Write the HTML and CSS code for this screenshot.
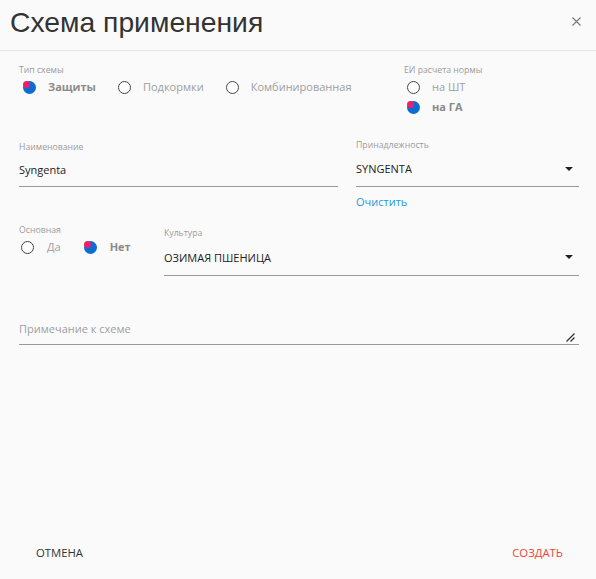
FILE: index.html
```html
<!DOCTYPE html>
<html lang="ru">
<head>
<meta charset="utf-8">
<link rel="stylesheet" href="styles.css">
</head>
<body>
<div class="dialog">
  <header class="head">
    <h1 class="title">Схема применения</h1>
    <button class="close" aria-label="close">
      <svg width="9" height="9" viewBox="0 0 9 9"><path d="M0.5 0.5L8.5 8.5M8.5 0.5L0.5 8.5" stroke="#777" stroke-width="1.1" fill="none"/></svg>
    </button>
  </header>
  <main class="content">
    <div class="row row-type">
      <div class="group">
        <div class="label">Тип схемы</div>
        <div class="radios">
          <span class="radio checked"><i class="dot"></i><span>Защиты</span></span>
          <span class="radio"><i class="dot"></i><span>Подкормки</span></span>
          <span class="radio"><i class="dot"></i><span>Комбинированная</span></span>
        </div>
      </div>
      <div class="group units">
        <div class="label">ЕИ расчета нормы</div>
        <div class="radios vertical">
          <span class="radio"><i class="dot"></i><span>на ШТ</span></span>
          <span class="radio checked"><i class="dot"></i><span>на ГА</span></span>
        </div>
      </div>
    </div>

    <div class="row row-name">
      <div class="field name">
        <div class="label">Наименование</div>
        <div class="input"><span class="value">Syngenta</span></div>
      </div>
      <div class="field owner">
        <div class="label">Принадлежность</div>
        <div class="input"><span class="value">SYNGENTA</span><i class="caret"></i></div>
        <a class="clear">Очистить</a>
      </div>
    </div>

    <div class="row row-main">
      <div class="group basic">
        <div class="label">Основная</div>
        <div class="radios">
          <span class="radio"><i class="dot"></i><span>Да</span></span>
          <span class="radio checked"><i class="dot"></i><span>Нет</span></span>
        </div>
      </div>
      <div class="field culture">
        <div class="label">Культура</div>
        <div class="input"><span class="value">ОЗИМАЯ ПШЕНИЦА</span><i class="caret"></i></div>
      </div>
    </div>

    <div class="row row-note">
      <div class="input note">
        <span class="placeholder">Примечание к схеме</span>
        <svg class="resize" width="9" height="9" viewBox="0 0 9 9"><path d="M8.5 0.5L0.5 8.5M8.5 4.5L4.5 8.5" stroke="#333" stroke-width="1.3" fill="none"/></svg>
      </div>
    </div>
  </main>
  <footer class="foot">
    <button class="btn cancel">ОТМЕНА</button>
    <button class="btn create">СОЗДАТЬ</button>
  </footer>
</div>
</body>
</html>
```
FILE: styles.css
```css
* { box-sizing: border-box; }
html, body { margin: 0; padding: 0; }
body {
  background: #fafafa;
  font-family: "Open Sans", "Noto Sans", sans-serif;
  color: #222;
  width: 596px;
  height: 579px;
  overflow: hidden;
}
.dialog {
  display: flex;
  flex-direction: column;
  height: 579px;
}
.head {
  height: 51px;
  border-bottom: 1px solid #e6e6e6;
  display: flex;
  align-items: flex-start;
  justify-content: space-between;
  padding: 0 15px 0 10px;
}
.title {
  margin: 6px 0 0;
  font-family: "Liberation Sans", Arial, sans-serif;
  font-weight: normal;
  font-size: 28.3px;
  line-height: 32px;
  color: #333;
}
.close {
  margin-top: 17px;
  border: 0;
  background: none;
  padding: 0;
  width: 9px;
  height: 9px;
  display: flex;
}
.content {
  flex: 1;
  padding: 0 17px 0 19px;
  display: flex;
  flex-direction: column;
}
.label {
  font-size: 8.7px;
  line-height: 12px;
  color: #9a9a9a;
}
.row { display: flex; }
.row-type { margin-top: 13px; height: 64px; }
.row-type .group:first-child { width: 385px; }
.radios { display: flex; align-items: center; margin-top: 3px; }
.radios.vertical { flex-direction: column; align-items: flex-start; gap: 4px; }
.radio {
  display: inline-flex;
  align-items: center;
  font-size: 11px;
  line-height: 16px;
  color: #9e9e9e;
  margin-right: 18px;
}
.radio .dot {
  width: 13px;
  height: 13px;
  border-radius: 50%;
  border: 1.5px solid #444;
  margin: 0 12px 0 4px;
  position: relative;
  background: #fff;
}
.radio.checked .dot {
  border: 0;
  background: #0d6cd4;
}
.radio.checked .dot::after {
  content: "";
  position: absolute;
  left: 0;
  top: 0;
  width: 7px;
  height: 7px;
  border-radius: 50%;
  background: #e8226a;
}
.radio.checked span { font-weight: bold; color: #8a8a8a; }
.units .radio .dot { margin-left: 3px; }

.row-name { gap: 18px; height: 96px; }
.name { width: 319px; padding-top: 13px; }
.owner { flex: 1; padding-top: 11px; }
.input {
  position: relative;
  display: flex;
  align-items: flex-start;
  border-bottom: 1px solid #999;
  height: 34px;
  padding-top: 9px;
  font-size: 11px;
  line-height: 16px;
  color: #222;
}
.owner .input { height: 36px; padding-top: 10px; }
.caret {
  position: absolute;
  right: 6px;
  top: 16px;
  width: 0;
  height: 0;
  border-left: 4px solid transparent;
  border-right: 4px solid transparent;
  border-top: 4px solid #222;
}
.clear {
  display: block;
  margin-top: 7px;
  font-size: 11px;
  line-height: 16px;
  color: #1a9be0;
}
.row-main { height: 90px; }
.basic { width: 145px; }
.basic .radio .dot { margin-left: 2px; margin-right: 13px; }
.basic .radio { margin-right: 21px; }
.culture { flex: 1; padding-top: 3px; }
.culture .input { height: 37px; padding-top: 11px; }
.note { flex: 1; height: 31px; padding-top: 7px; }
.placeholder { color: #9e9e9e; font-size: 11px; line-height: 16px; }
.resize { position: absolute; right: 4px; bottom: 2px; }
.foot {
  display: flex;
  justify-content: space-between;
  padding: 0 33px 18px 36px;
}
.btn {
  border: 0;
  background: none;
  padding: 0;
  font-family: "Open Sans", "Noto Sans", sans-serif;
  font-size: 11.3px;
  line-height: 16px;
}
.cancel { color: #333; }
.create { color: #f44336; }
```
